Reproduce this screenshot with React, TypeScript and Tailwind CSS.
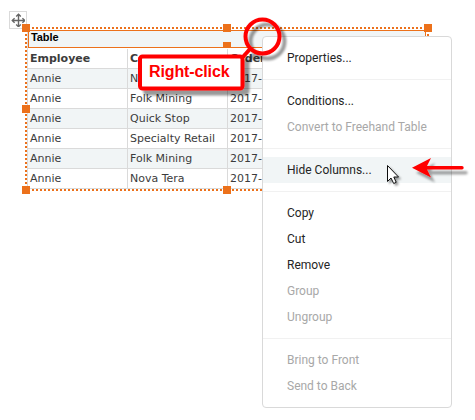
import React from "react";

const rows = [
  ["Annie", "Nova Tera", "2017-01-03"],
  ["Annie", "Folk Mining", "2017-01-05"],
  ["Annie", "Quick Stop", "2017-01-09"],
  ["Annie", "Specialty Retail", "2017-01-12"],
  ["Annie", "Folk Mining", "2017-01-17"],
  ["Annie", "Nova Tera", "2017-01-20"],
];

type Item = { label: string; disabled?: boolean; active?: boolean };

const groups: Item[][] = [
  [{ label: "Properties..." }],
  [{ label: "Conditions..." }, { label: "Convert to Freehand Table", disabled: true }],
  [{ label: "Hide Columns...", active: true }],
  [
    { label: "Copy" },
    { label: "Cut" },
    { label: "Remove" },
    { label: "Group", disabled: true },
    { label: "Ungroup", disabled: true },
  ],
  [
    { label: "Bring to Front", disabled: true },
    { label: "Send to Back", disabled: true },
  ],
];

function TableRow({ cells, header, striped }: { cells: string[]; header?: boolean; striped?: boolean }) {
  return (
    <div
      className={`grid h-5 grid-cols-[100px_100px_198px] border-b border-[#dadada] text-[11px] text-[#3c3c3c] ${
        header ? "font-bold" : ""
      } ${striped ? "bg-[#f1f5f6]" : "bg-white"}`}
    >
      {cells.map((cell, i) => (
        <span key={i} className="overflow-hidden border-r border-[#dadada] pl-[2px] leading-[20px] whitespace-nowrap">
          {cell}
        </span>
      ))}
    </div>
  );
}

function DataTable() {
  return (
    <div className="flex w-[399px] flex-col border-l border-[#dadada] font-['DejaVu_Sans','Liberation_Sans',sans-serif]">
      <div className="h-[18px] border border-[#ec711b] bg-[#f1f5f6] pl-[2px] font-['Liberation_Sans',Arial,sans-serif] text-[11px] leading-[13px] font-bold tracking-[-0.1px] text-black">
        Table
      </div>
      <div className="flex flex-col pt-px">
        <TableRow header cells={["Employee", "Company", "Order Date"]} />
        {rows.map((row, i) => (
          <TableRow key={i} cells={row} striped={i % 2 === 0} />
        ))}
      </div>
    </div>
  );
}

const handles: [number, number][] = [
  [22, 24],
  [223, 24],
  [424, 24],
  [22, 105],
  [424, 105],
  [22, 186],
  [223, 186],
  [424, 186],
];

function Selection() {
  return (
    <svg className="pointer-events-none absolute inset-0" width="475" height="420" shapeRendering="crispEdges">
      <path
        d="M28 28H428M28 190H428M26 30V190M428 30V190"
        stroke="#ec711b"
        strokeWidth="2"
        strokeDasharray="2 2"
        fill="none"
      />
      <g fill="#ec711b">
        {handles.map(([x, y]) => (
          <rect key={`${x}-${y}`} x={x} y={y} width="8" height="8" />
        ))}
        <rect x="223" y="42" width="8" height="6" />
      </g>
    </svg>
  );
}

function MoveGrip() {
  return (
    <div className="absolute top-[11px] left-[9px] flex size-[18px] items-center justify-center border border-[#dadada] bg-white">
      <svg className="shrink-0" width="14" height="14" viewBox="0 0 14 14" fill="none" stroke="#666" strokeWidth="1.4">
        <path d="M7.5 1.5V13.5M1.5 7.5H13.5" />
        <path d="M5.2 3.6L7.5 1.3L9.8 3.6M5.2 11.4L7.5 13.7L9.8 11.4M3.6 5.2L1.3 7.5L3.6 9.8M11.4 5.2L13.7 7.5L11.4 9.8" />
      </svg>
    </div>
  );
}

function ContextMenu() {
  return (
    <div className="absolute top-[36px] left-[262px] flex w-[190px] flex-col rounded-[4px] border border-[#d9d9d9] bg-white py-2 font-[Roboto,sans-serif] text-[12px]">
      {groups.map((group, g) => (
        <div key={g} className={`flex flex-col ${g > 0 ? "mt-2 border-t border-[#f1f1f1] pt-2" : ""}`}>
          {group.map((item) => (
            <div
              key={item.label}
              className={`h-[26px] pl-6 leading-[26px] whitespace-nowrap ${
                item.active ? "bg-[#f1f5f6]" : ""
              } ${item.disabled ? "text-[#a8a8a8]" : "text-[#252525]"}`}
            >
              {item.label}
            </div>
          ))}
        </div>
      ))}
    </div>
  );
}

function Annotations() {
  return (
    <>
      <svg className="pointer-events-none absolute inset-0" width="475" height="420">
        <defs>
          <filter id="soft" x="-20%" y="-20%" width="150%" height="150%">
            <feDropShadow dx="5" dy="5" stdDeviation="1.3" floodColor="#000" floodOpacity="0.4" />
          </filter>
          <filter id="arrowShadow" x="-20%" y="-40%" width="150%" height="200%">
            <feDropShadow dx="4" dy="5" stdDeviation="1" floodColor="#000" floodOpacity="0.35" />
          </filter>
          <filter id="cursorShadow" x="-30%" y="-30%" width="180%" height="180%">
            <feDropShadow dx="2" dy="2" stdDeviation="1" floodColor="#000" floodOpacity="0.4" />
          </filter>
        </defs>
        <g filter="url(#soft)" stroke="#ff0000" strokeWidth="4">
          <circle cx="262.5" cy="36.5" r="17" fill="none" />
          <path d="M250 49L242 58" />
          <rect x="140" y="56.5" width="102.5" height="32" rx="2.5" fill="#fff" />
        </g>
        <g filter="url(#arrowShadow)" fill="#ff0000">
          <path d="M412 167.8L431 158L427 166H462Q463.7 166 463.7 167.8Q463.7 169.6 462 169.6H427L431 177.5Z" />
        </g>
        <path
          filter="url(#cursorShadow)"
          d="M387.5 165.5V181.5L391 178L393.7 183.5L396.2 182.3L393.8 177H398.5Z"
          fill="#fff"
          stroke="#111"
          strokeWidth="1"
        />
      </svg>
      <div className="absolute top-[60px] left-[149px] font-['Liberation_Sans',Arial,sans-serif] text-[16px] leading-[24px] font-bold tracking-[-0.12px] whitespace-nowrap text-[#ff0000]">
        Right-click
      </div>
    </>
  );
}

export default function App() {
  return (
    <main className="relative flex h-[420px] w-[475px] flex-col items-start overflow-hidden bg-white pt-[30px] pl-[27px]">
      <DataTable />
      <MoveGrip />
      <Selection />
      <ContextMenu />
      <Annotations />
    </main>
  );
}
